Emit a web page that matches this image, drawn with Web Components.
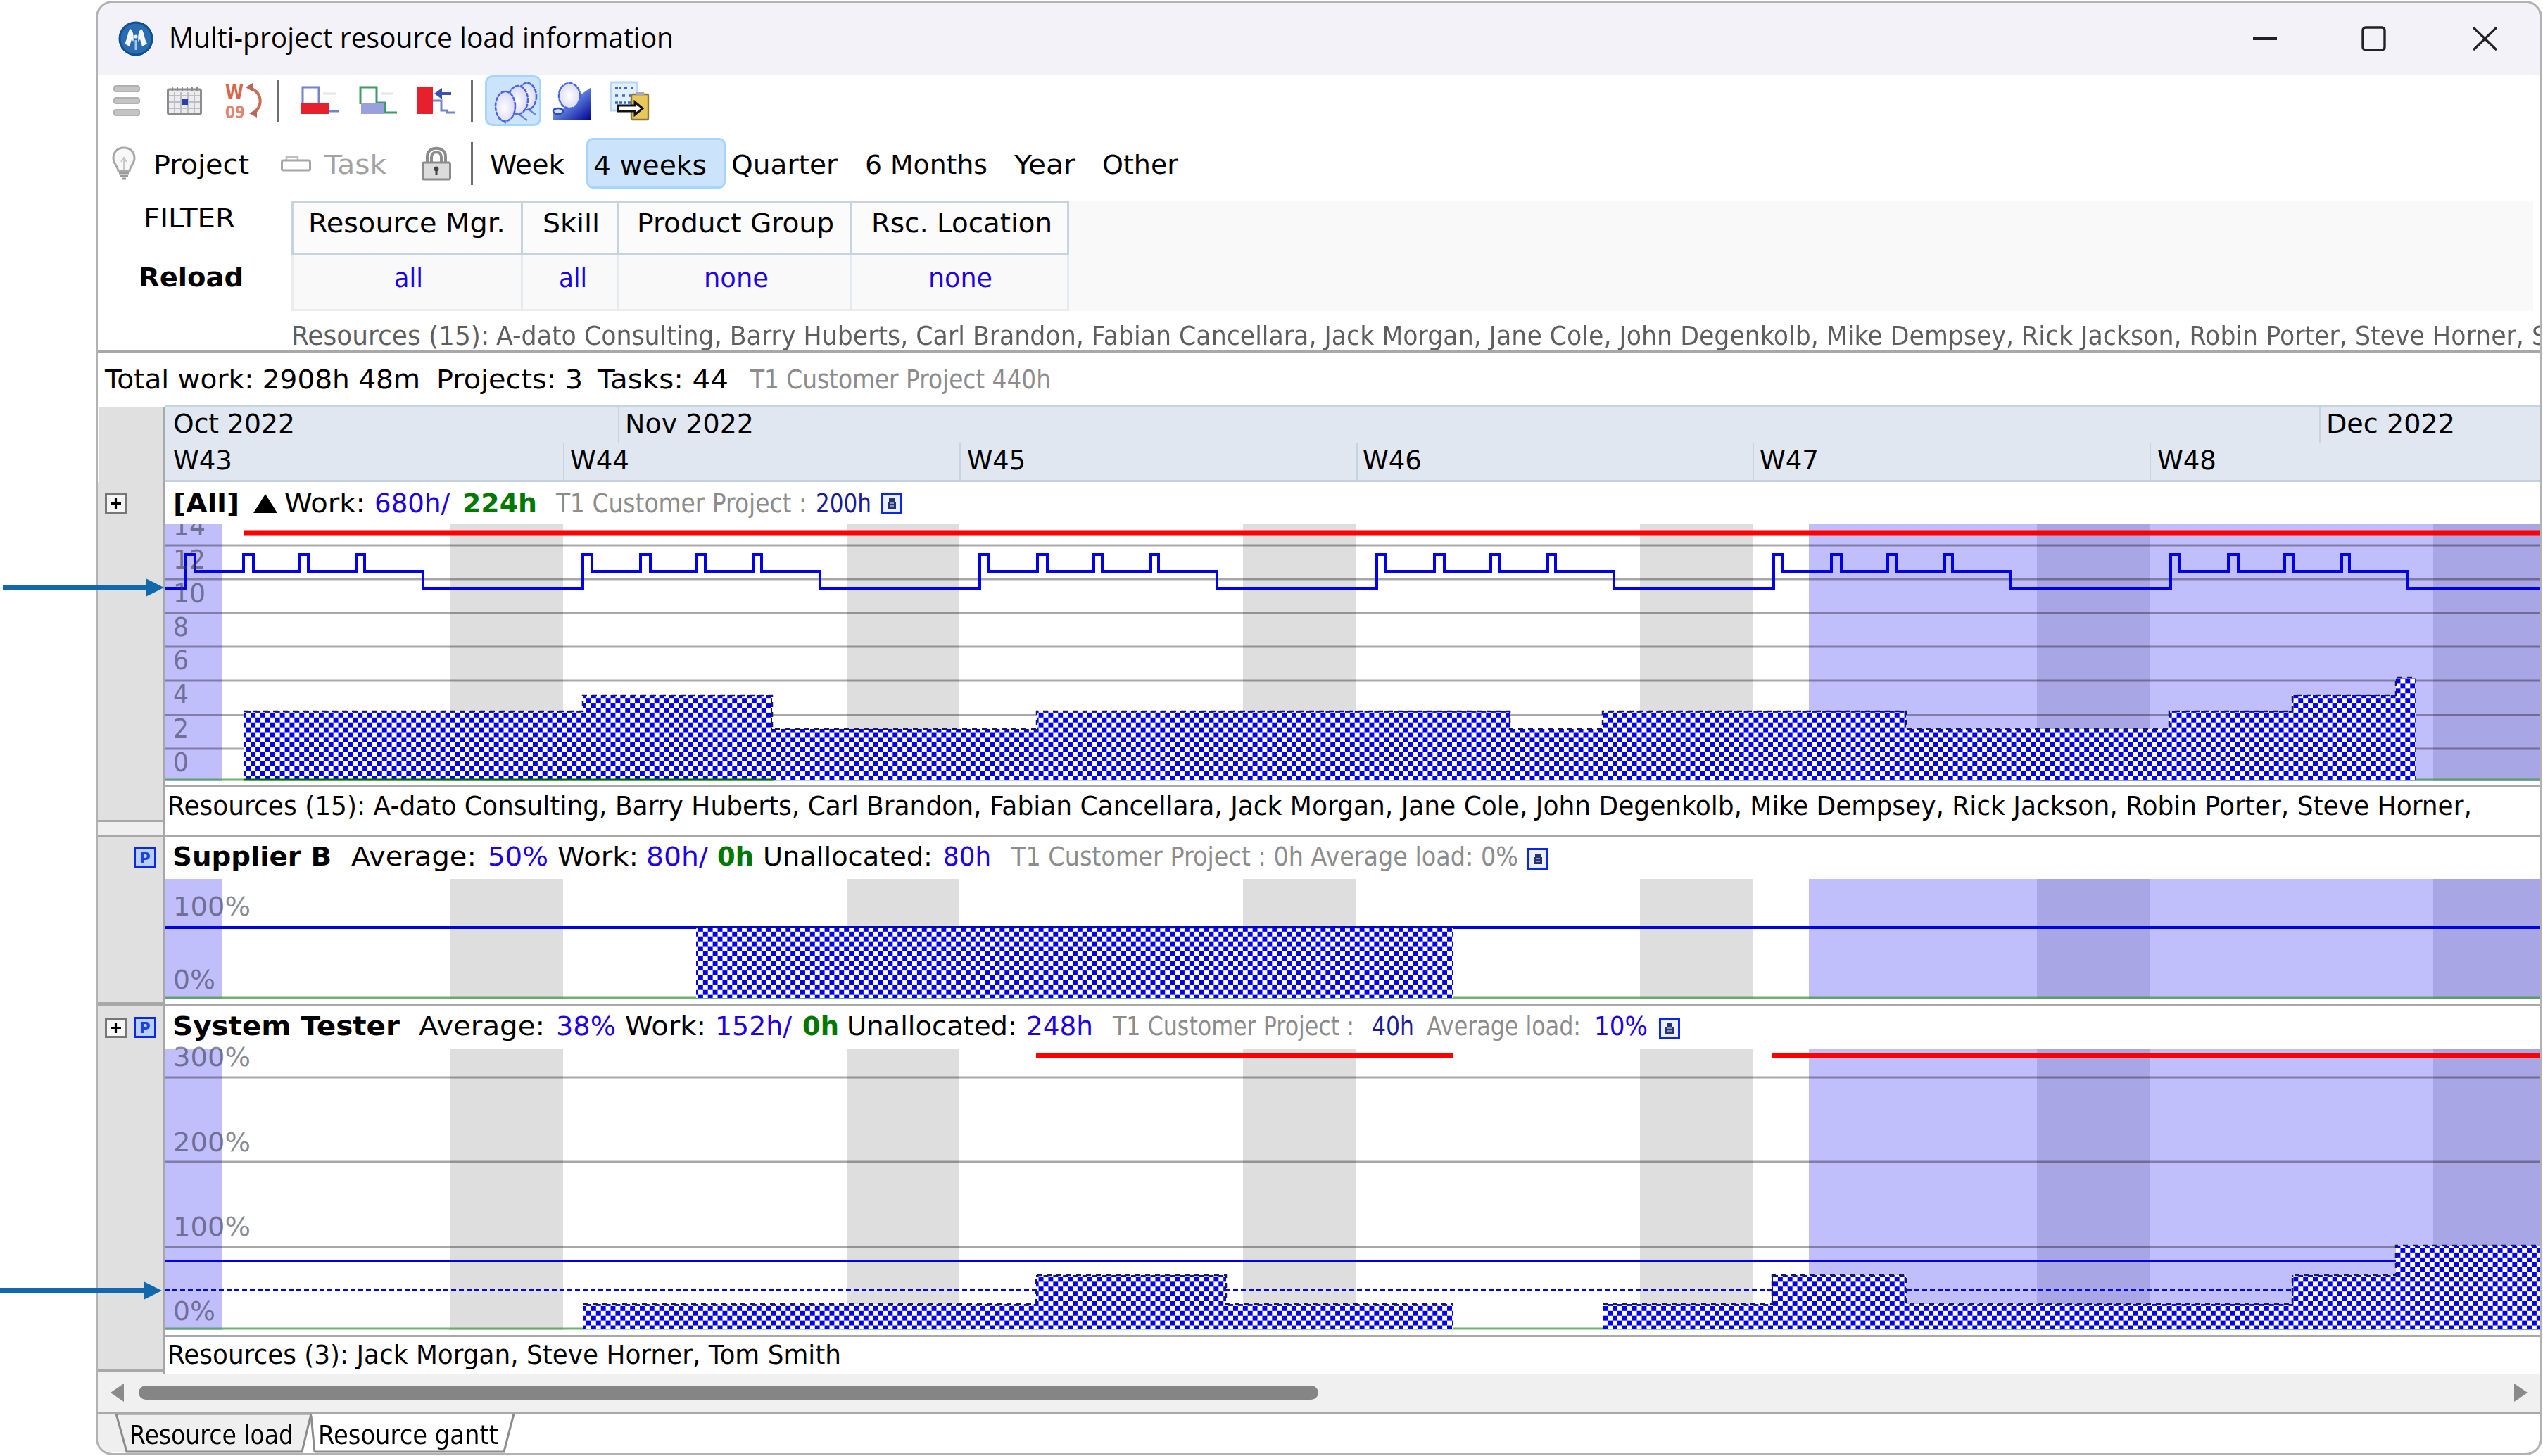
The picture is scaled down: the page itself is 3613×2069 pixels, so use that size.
<!DOCTYPE html>
<html lang="en"><head><meta charset="utf-8"><title>Multi-project resource load information</title>
<style>
html,body{margin:0;padding:0;background:#fff;width:3613px;height:2069px;overflow:hidden}
body{position:relative;font:38px/44px "DejaVu Sans",sans-serif;color:#000}
</style></head><body>
<rs-window>
  <rs-titlebar>
    <rs-row o="139" style="height:102px">
      <rs-icon a="168" b="218" h="50" n="logo"></rs-icon>
      <rs-fit a="240" b="957" f="open" dy="-2" style="font-size:40px">Multi-project resource load information</rs-fit>
      <rs-icon a="3201" b="3235" h="6" n="min"></rs-icon>
      <rs-icon a="3355" b="3390" h="36" n="max"></rs-icon>
      <rs-icon a="3512" b="3549" h="36" n="close"></rs-icon>
    </rs-row>
  </rs-titlebar>
  <rs-row o="139" style="height:74px">
    <rs-icon a="161" b="199" h="44" n="menu"></rs-icon>
    <rs-icon a="237" b="287" h="41" n="cal"></rs-icon>
    <rs-icon a="320" b="373" h="52" n="w09"></rs-icon>
    <rs-icon a="394" b="397" h="61" n="sep"></rs-icon>
    <rs-icon a="427" b="482" h="42" n="lred"></rs-icon>
    <rs-icon a="509" b="565" h="42" n="lgreen"></rs-icon>
    <rs-icon a="593" b="647" h="42" n="larrow"></rs-icon>
    <rs-icon a="669" b="672" h="61" n="sep"></rs-icon>
    <rs-icon a="689" b="769" h="72" n="team"></rs-icon>
    <rs-icon a="784" b="840" h="55" n="slope"></rs-icon>
    <rs-icon a="867" b="922" h="55" n="doc"></rs-icon>
  </rs-row>
  <rs-row o="139" style="height:72px;margin:16px 0 18px">
    <rs-icon a="159" b="193" h="48" n="bulb"></rs-icon>
    <rs-fit a="218" b="354" dy="2">Project</rs-fit>
    <rs-icon a="399" b="442" h="23" n="task"></rs-icon>
    <rs-fit a="461" b="549" c="mute" dy="2">Task</rs-fit>
    <rs-icon a="599" b="641" h="48" n="lock"></rs-icon>
    <rs-icon a="669" b="672" h="61" n="sep"></rs-icon>
    <rs-fit a="696" b="802" dy="2">Week</rs-fit>
    <rs-btn a="833" b="1031"><rs-fit o="836" a="843" b="1004" dy="3">4 weeks</rs-fit></rs-btn>
    <rs-fit a="1039" b="1190" dy="2">Quarter</rs-fit>
    <rs-fit a="1229" b="1403" dy="2">6 Months</rs-fit>
    <rs-fit a="1441" b="1528" dy="2">Year</rs-fit>
    <rs-fit a="1566" b="1674" dy="2">Other</rs-fit>
  </rs-row>
  <rs-filter></rs-filter>
  <rs-row o="139" class="res" style="height:56px;align-items:flex-start;padding-top:13px;box-sizing:border-box;overflow:hidden;color:#5e5e5e">
    <rs-fit a="414" b="695">Resources (15):</rs-fit>
    <rs-fit a="705" b="3619">A-dato Consulting, Barry Huberts, Carl Brandon, Fabian Cancellara, Jack Morgan, Jane Cole, John Degenkolb, Mike Dempsey, Rick Jackson, Robin Porter, Steve Horner, S</rs-fit>
  </rs-row>
  <rs-rule></rs-rule>
  <rs-row o="139" style="height:74px">
    <rs-fit a="149" b="597">Total work: 2908h 48m</rs-fit>
    <rs-fit a="620" b="828">Projects: 3</rs-fit>
    <rs-fit a="849" b="1035">Tasks: 44</rs-fit>
    <rs-fit a="1066" b="1493" c="grey">T1 Customer Project 440h</rs-fit>
  </rs-row>
  <rs-timeline></rs-timeline>

  <rs-section style="--strip:21px;--rule:3px;--foot:70px">
    <rs-row slot="tools" o="139" style="height:60px"><rs-icon a="149" b="180" h="29" n="plus"></rs-icon></rs-row>
    <rs-row slot="head" o="234" style="height:60px">
      <rs-fit a="246" b="340" c="bold">[All]</rs-fit>
      <rs-icon a="360" b="394" h="28" n="tri"></rs-icon>
      <rs-fit a="404" b="519">Work:</rs-fit>
      <rs-fit a="532" b="639" c="blue">680h/</rs-fit>
      <rs-fit a="657" b="763" c="green">224h</rs-fit>
      <rs-fit a="790" b="1146" c="grey">T1 Customer Project :</rs-fit>
      <rs-fit a="1159" b="1238" c="navy">200h</rs-fit>
      <rs-icon a="1252" b="1283" h="31" n="mini"></rs-icon>
    </rs-row>
    <rs-chart slot="chart" k="all" style="height:371px;overflow:hidden"></rs-chart>
    <rs-row slot="foot" o="234" style="align-items:flex-start;padding-top:4px">
      <rs-fit a="238" b="3512">Resources (15): A-dato Consulting, Barry Huberts, Carl Brandon, Fabian Cancellara, Jack Morgan, Jane Cole, John Degenkolb, Mike Dempsey, Rick Jackson, Robin Porter, Steve Horner,</rs-fit>
    </rs-row>
  </rs-section>

  <rs-section style="--strip:0px;--rule:3px;--foot:0px;--footrule:0px">
    <rs-row slot="tools" o="139" style="height:60px"><rs-icon a="190" b="222" h="30" n="p"></rs-icon></rs-row>
    <rs-row slot="head" o="234" style="height:60px;padding-bottom:4px">
      <rs-fit a="245" b="471" c="bold">Supplier B</rs-fit>
      <rs-fit a="499" b="677">Average:</rs-fit>
      <rs-fit a="693" b="779" c="blue">50%</rs-fit>
      <rs-fit a="792" b="907">Work:</rs-fit>
      <rs-fit a="918" b="1006" c="blue">80h/</rs-fit>
      <rs-fit a="1019" b="1071" c="green">0h</rs-fit>
      <rs-fit a="1084" b="1325">Unallocated:</rs-fit>
      <rs-fit a="1340" b="1408" c="blue">80h</rs-fit>
      <rs-fit a="1437" b="2157" c="grey">T1 Customer Project : 0h Average load: 0%</rs-fit>
      <rs-icon a="2170" b="2200" h="31" n="mini" style="margin-top:6px"></rs-icon>
    </rs-row>
    <rs-chart slot="chart" k="sup" style="height:178px"></rs-chart>
  </rs-section>

  <rs-section style="--strip:6px;--rule:0px;--foot:55px">
    <rs-row slot="tools" o="139" style="height:60px"><rs-icon a="149" b="180" h="29" n="plus"></rs-icon><rs-icon a="190" b="222" h="30" n="p"></rs-icon></rs-row>
    <rs-row slot="head" o="234" style="height:60px;padding-bottom:4px">
      <rs-fit a="245" b="568" c="bold">System Tester</rs-fit>
      <rs-fit a="595" b="774">Average:</rs-fit>
      <rs-fit a="790" b="875" c="blue">38%</rs-fit>
      <rs-fit a="888" b="1003">Work:</rs-fit>
      <rs-fit a="1016" b="1125" c="blue">152h/</rs-fit>
      <rs-fit a="1140" b="1192" c="green">0h</rs-fit>
      <rs-fit a="1203" b="1445">Unallocated:</rs-fit>
      <rs-fit a="1458" b="1553" c="blue">248h</rs-fit>
      <rs-fit a="1581" b="1924" c="grey">T1 Customer Project :</rs-fit>
      <rs-fit a="1949" b="2009" c="navy">40h</rs-fit>
      <rs-fit a="2027" b="2246" c="grey">Average load:</rs-fit>
      <rs-fit a="2265" b="2341" c="blue">10%</rs-fit>
      <rs-icon a="2357" b="2387" h="31" n="mini" style="margin-top:6px"></rs-icon>
    </rs-row>
    <rs-chart slot="chart" k="test" style="height:407px"></rs-chart>
    <rs-row slot="foot" o="234" style="align-items:flex-start;padding-top:3px">
      <rs-fit a="238" b="1195">Resources (3): Jack Morgan, Steve Horner, Tom Smith</rs-fit>
    </rs-row>
  </rs-section>

  <rs-scrollbar></rs-scrollbar>
  <rs-tabs>
    <rs-fit a="184" b="417" o="139">Resource load</rs-fit>
    <rs-fit a="452" b="708">Resource gantt</rs-fit>
  </rs-tabs>
</rs-window>
<rs-callout style="left:4px;top:821px;--w:229px"></rs-callout>
<rs-callout style="left:0;top:1820px;--w:230px"></rs-callout>

<script>
const def=(n,c)=>customElements.define(n,c);
function placeX(el){
  const a=+el.getAttribute('a');
  if(!el.hasAttribute('a'))return;
  const p=el.previousElementSibling;
  let o;
  if(el.hasAttribute('o'))o=+el.getAttribute('o');
  else if(p&&p.hasAttribute('b'))o=+p.getAttribute('b');
  else o=+(el.parentElement&&el.parentElement.getAttribute('o')||a);
  el.style.marginLeft=(a-o)+'px';
}
class Fit extends HTMLElement{
  connectedCallback(){
    if(this.shadowRoot)return;
    const s=this.attachShadow({mode:'open'});
    s.innerHTML=`<style>
      :host{display:inline-block;flex:none;white-space:nowrap;height:44px;line-height:44px}
      :host([f=open]){font-family:"Open Sans",sans-serif}
      :host([c=bold]){font-weight:700}
      :host([c=blue]){color:#2000e8}
      :host([c=navy]){color:#1c1c96}
      :host([c=green]){color:#007800;font-weight:700}
      :host([c=grey]){color:#8c8c8c}
      :host([c=mute]){color:#a2a2a2}
      span{display:inline-block;transform-origin:0 50%}
    </style><span><slot></slot></span>`;
    placeX(this);
    const w=+this.getAttribute('b')-+this.getAttribute('a');
    this.style.width=w+'px';
    const sp=s.querySelector('span');
    const nat=sp.getBoundingClientRect().width||w;
    const dy=this.getAttribute('dy')||0;
    sp.style.transform=`translateY(${dy}px) scaleX(${w/nat})`;
  }
}
const dash='stroke="#4a66dc" stroke-width="2.600" stroke-dasharray="4 3" stroke-linecap="round"';
const ICONS={
 logo:()=>`<circle cx="25" cy="25" r="24" fill="#2a6cb0"/><circle cx="25" cy="25" r="23" fill="none" stroke="#114f94" stroke-width="3"/>
  <path d="M17 11C21 14 22.500 20 21.500 29L19 26L16 36L9 32C13 26 13 16 17 11Z" fill="#f4f8fc"/><path d="M33 11C29 14 27.500 20 28.500 29L31 26L34 36L41 32C37 26 37 16 33 11Z" fill="#f4f8fc"/><circle cx="25" cy="22" r="2.600" fill="#e4eef8"/><path d="M25 27V41" stroke="#a8c8e4" stroke-width="3"/>`,
 min:()=>`<rect y="1" width="34" height="4" fill="#222"/>`,
 max:()=>`<rect x="2" y="2" width="31" height="32" rx="4" fill="none" stroke="#222" stroke-width="3.400"/>`,
 close:()=>`<path d="M2 2L35 34M35 2L2 34" stroke="#222" stroke-width="3.200" fill="none"/>`,
 menu:()=>`<g fill="#c4c4c4" stroke="#b0b0b0" stroke-width="2"><rect x="1" y="1" width="36" height="8" rx="3"/><rect x="1" y="18" width="36" height="8" rx="3"/><rect x="1" y="35" width="36" height="8" rx="3"/></g>`,
 cal:()=>`<rect x="1.500" y="4" width="47" height="35" rx="2" fill="#ececec" stroke="#8c8c8c" stroke-width="3"/>
  <path d="M8 1V7M15 1V7M22 1V7M29 1V7M36 1V7M43 1V7" stroke="#8c8c8c" stroke-width="2"/>
  <path d="M3 13H47M3 22H47M3 31H47M11 8V38M20 8V38M30 8V38M39 8V38" stroke="#bdbdc8" stroke-width="2"/><rect x="21" y="17" width="9" height="9" fill="#2a3fb0"/>`,
 w09:()=>`<text x="0" y="23" font-family="DejaVu Sans" font-size="27" font-weight="700" textLength="26" lengthAdjust="spacingAndGlyphs" fill="#d8664c">W</text><text x="0" y="51" font-family="DejaVu Sans" font-size="24" font-weight="700" textLength="28" lengthAdjust="spacingAndGlyphs" fill="#e08570">09</text>
  <path d="M32 7C52 12 56 32 39 45" fill="none" stroke="#c87058" stroke-width="4"/><path d="M29 7L39 1V13ZM34 44L45 38L45 50Z" fill="#b8665a"/>`,
 sep:()=>`<rect width="3" height="61" fill="#6e6e6e"/>`,
 lred:()=>`<path d="M3 26V2H26V26" fill="none" stroke="#7384cc" stroke-width="3"/><path d="M40 36H54" stroke="#7384cc" stroke-width="3"/><path d="M32 11H50" stroke="#e4e4e4" stroke-width="3"/><rect x="1" y="25" width="40" height="15" fill="#e6202c"/>`,
 lgreen:()=>`<path d="M3 26V2H26V24H38V38H55" fill="none" stroke="#3f9a66" stroke-width="3"/><path d="M32 11H50" stroke="#e4e4e4" stroke-width="3"/><rect x="4" y="25" width="33" height="15" fill="#9aa0dc"/>`,
 larrow:()=>`<rect x="0" y="1" width="22" height="39" fill="#e6202c"/><path d="M26 11H48" stroke="#3a52b0" stroke-width="4"/><path d="M24 11L35 3V19Z" fill="#3a52b0"/><path d="M22 21H34V35H42V38H54" fill="none" stroke="#7384cc" stroke-width="3"/>`,
 team:()=>`<defs><radialGradient id="g" cx=".45" cy=".55" r=".6"><stop offset="0" stop-color="#fff"/><stop offset="1" stop-color="#d4d4f4"/></radialGradient></defs>
  <rect x="1.500" y="1.500" width="77" height="69" rx="9" fill="#cce4fb" stroke="#a6d6fb" stroke-width="3"/>
  <path d="M18 60L30 68M44 52L60 64M56 44L72 56" stroke="#6a86dc" stroke-width="2.400"/>
  <ellipse cx="60" cy="30" rx="13" ry="19" fill="url(#g)" ${dash}/><ellipse cx="47" cy="35" rx="14" ry="20" fill="url(#g)" ${dash}/><ellipse cx="29" cy="44" rx="14" ry="21" fill="url(#g)" ${dash}/>`,
 slope:()=>`<defs><linearGradient id="h" x1="0" y1="0" x2="1" y2="1"><stop offset="0" stop-color="#c8daf6"/><stop offset=".55" stop-color="#5070d4"/><stop offset="1" stop-color="#000090"/></linearGradient><radialGradient id="g2"><stop offset="0" stop-color="#fff"/><stop offset="1" stop-color="#dcdcf6"/></radialGradient></defs>
  <path d="M1 54V43L18 38L36 22L56 8V54Z" fill="url(#h)"/><ellipse cx="25" cy="20" rx="15" ry="18" fill="url(#g2)" ${dash}/><ellipse cx="9" cy="42" rx="7" ry="4" fill="#d4e0f4" stroke="#2848c8" stroke-width="2.600"/>`,
 doc:()=>`<rect x="1" y="1" width="37" height="40" fill="#e4effc" stroke="#b8d6f6" stroke-width="3"/><path d="M7 9H16M20 9H24M29 9H33M7 20H13M17 20H22M26 20H33M7 30H33" stroke="#2e6ad8" stroke-width="3.400" stroke-dasharray="4 2"/>
  <rect x="30" y="18" width="24" height="36" rx="2" fill="#e8c858" stroke="#8a7a3a" stroke-width="2.400"/><rect x="36" y="15" width="12" height="6" fill="#aaa"/>
  <path d="M11 34H35V29L46 38L35 47V42H11Z" fill="#fff" stroke="#111" stroke-width="3"/>`,
 bulb:()=>`<path d="M17 2C7 2 2 9 2 17C2 24 8 28 9 35H25C26 28 32 24 32 17C32 9 27 2 17 2Z" fill="#f8f8f8" stroke="#a8a8a8" stroke-width="3"/><path d="M13 22L17 16L21 22M17 16V34" fill="none" stroke="#c8c8c8" stroke-width="2"/><path d="M10 38H24M11 42H23M14 46H20" stroke="#9c9c9c" stroke-width="3"/>`,
 task:()=>`<path d="M8 11V2H24V7" fill="none" stroke="#c0c0c0" stroke-width="2.600"/><rect x="1.500" y="7" width="40" height="14" rx="2" fill="#fff" stroke="#a6a6a6" stroke-width="3"/>`,
 lock:()=>`<path d="M8 24V14C8 -1 34 -1 34 14V24M14 24V15C14 6 28 6 28 15V24" fill="none" stroke="#8c8c8c" stroke-width="4"/><rect x="1.500" y="23" width="39" height="24" rx="2" fill="#dcdcdc" stroke="#8c8c8c" stroke-width="3"/><circle cx="21" cy="32" r="3.400" fill="#444"/><rect x="19.500" y="32" width="3" height="9" fill="#444"/>`,
 plus:()=>`<rect x="1.500" y="1.500" width="28" height="26" fill="#f6f6f6" stroke="#777" stroke-width="3"/><path d="M15.500 7V22M8 14.500H23" stroke="#000" stroke-width="3.200"/>`,
 p:()=>`<rect x="1.500" y="1.500" width="29" height="27" fill="#b8d0ff" stroke="#0a28e6" stroke-width="3"/><text x="16" y="23" text-anchor="middle" font-family="DejaVu Sans" font-size="21" font-weight="700" fill="#1a44e0">P</text>`,
 mini:()=>`<rect x="1.500" y="1.500" width="27" height="28" fill="#eaf0ff" stroke="#0a28e6" stroke-width="3"/><path d="M11 8H19V13H21V23H9V13H11Z" fill="#26346e"/><path d="M12 15H18M12 19H18" stroke="#a8b8e8" stroke-width="1.600"/>`,
 tri:()=>`<path d="M17 1L34 28H0Z" fill="#000"/>`,
 left:()=>`<path d="M19 0V26L0 13Z" fill="#8a8a8a"/>`,
 right:()=>`<path d="M0 0V26L19 13Z" fill="#8a8a8a"/>`
};
class Icon extends HTMLElement{
  connectedCallback(){
    if(this.shadowRoot)return;
    const w=+this.getAttribute('b')-+this.getAttribute('a'),h=+this.getAttribute('h');
    this.attachShadow({mode:'open'}).innerHTML=`<style>:host{display:block;flex:none;line-height:0}svg{display:block;overflow:visible}</style><svg width="${w}" height="${h}" viewBox="0 0 ${w} ${h}">${ICONS[this.getAttribute('n')]()}</svg>`;
    placeX(this);
  }
}
class Row extends HTMLElement{
  constructor(){super();this.attachShadow({mode:'open'}).innerHTML=`<style>:host{display:flex;align-items:center;box-sizing:border-box}</style><slot></slot>`;}
}
class Btn extends HTMLElement{
  constructor(){super();this.attachShadow({mode:'open'}).innerHTML=`<style>:host{display:flex;align-items:center;flex:none;box-sizing:border-box;height:72px;border:3px solid #a8d6fb;border-radius:9px;background:#cce4fb}</style><slot></slot>`;}
  connectedCallback(){placeX(this);this.style.width=(this.getAttribute('b')-this.getAttribute('a'))+'px';}
}
class Win extends HTMLElement{
  constructor(){super();this.attachShadow({mode:'open'}).innerHTML=`<style>
   :host{display:block;box-sizing:border-box;position:absolute;left:136px;top:1px;width:3476px;height:2067px;border:3px solid #b2b2b2;border-radius:24px;background:#fff;overflow:hidden;filter:blur(.7px)}
  </style><slot></slot>`;}
}
class Title extends HTMLElement{
  constructor(){super();this.attachShadow({mode:'open'}).innerHTML=`<style>:host{display:block;background:#f3f2f8}</style><slot></slot>`;}
}
class Rule extends HTMLElement{
  constructor(){super();this.attachShadow({mode:'open'}).innerHTML=`<style>:host{display:block;height:4px;background:#a8a8a8}</style>`;}
}
class Filter extends HTMLElement{
  constructor(){super();this.attachShadow({mode:'open'}).innerHTML=`<style>
   :host{display:flex;height:156px}
   .lab{width:275px;flex:none;display:grid;grid-template-rows:77px 79px}
   .lab rs-row{align-items:flex-start}
   .g{flex:none;width:3185px;background:#f9f9f9;display:grid;grid-template-columns:329px 137px 331px 308px 1fr;grid-template-rows:77px 79px}
   .h,.v{box-sizing:border-box;display:flex}
   .h{border:3px solid #c6d3e3;border-left-width:0;padding-top:6px;background:#fbfbfb}
   .h.f{border-left-width:3px}
   .v{border-right:3px solid #e6e9ee;border-bottom:3px solid #ececec;padding-top:10px;color:#2000e8}
   .v.f{border-left:3px solid #ececec}
   .e{background:#f9f9f9}
  </style>
  <div class="lab">
   <rs-row o="139" style="padding-top:2px"><rs-fit a="204" b="334">FILTER</rs-fit></rs-row>
   <rs-row o="139" style="padding-top:9px"><rs-fit a="197" b="346" c="bold">Reload</rs-fit></rs-row>
  </div>
  <div class="g">
   <div class="h f"><rs-fit o="417" a="438" b="718">Resource Mgr.</rs-fit></div>
   <div class="h"><rs-fit o="743" a="771" b="852">Skill</rs-fit></div>
   <div class="h"><rs-fit o="880" a="905" b="1185">Product Group</rs-fit></div>
   <div class="h"><rs-fit o="1211" a="1238" b="1495">Rsc. Location</rs-fit></div>
   <div class="e"></div>
   <div class="v f"><rs-fit o="417" a="560" b="601" c="blue">all</rs-fit></div>
   <div class="v"><rs-fit o="743" a="794" b="834" c="blue">all</rs-fit></div>
   <div class="v"><rs-fit o="880" a="1000" b="1092" c="blue">none</rs-fit></div>
   <div class="v"><rs-fit o="1211" a="1319" b="1410" c="blue">none</rs-fit></div>
   <div class="e"></div>
  </div>`;}
}
class Timeline extends HTMLElement{
  constructor(){super();
   const m=[[234,878,'Oct 2022',246,419],[878,3295,'Nov 2022',888,1071],[3295,3609,'Dec 2022',3305,3488]];
   const w=[[234,800,'W43',246,330],[800,1363,'W44',810,894],[1363,1927,'W45',1374,1457],[1927,2490,'W46',1936,2020],[2490,3054,'W47',2500,2584],[3054,3609,'W48',3065,3149]];
   const cell=(r,i)=>`<div class="c" style="width:${r[1]-r[0]}px"><rs-fit dy="-2" o="${i?r[0]+2:r[0]}" a="${r[3]}" b="${r[4]}">${r[2]}</rs-fit></div>`;
   this.attachShadow({mode:'open'}).innerHTML=`<style>
   :host{display:flex;height:109px;box-sizing:border-box}
   .l{width:90px;margin-left:2px;margin-top:2px;background:#e0e0e0;flex:none;border-right:3px solid #a9a9a9}
   .r{flex:1;background:#e1e7f0;border-top:3px solid #c6d3e3;border-bottom:3px solid #c2d0e0;box-sizing:border-box;display:flex;flex-direction:column}
   .y{height:50px;display:flex;align-items:flex-end}.y2{height:53px;display:flex;align-items:stretch}
   .c{box-sizing:border-box;flex:none;display:flex;align-items:center;border-left:2px solid #c6d3e3}
   .y .c{height:50px}.y .c:first-child,.y2 .c:first-child{border-left:0}
  </style><div class="l"></div><div class="r"><div class="y">${m.map(cell).join('')}</div><div class="y2">${w.map(cell).join('')}</div></div>`;}
}
class Section extends HTMLElement{
  constructor(){super();this.attachShadow({mode:'open'}).innerHTML=`<style>
   :host{display:grid;grid-template-columns:95px 1fr;box-sizing:border-box;border-bottom:var(--rule,0) solid #a8a8a8}
   .l{display:flex;flex-direction:column;box-sizing:border-box}
   .fill{flex:1;background:#e0e0e0;border-right:3px solid #a6a6a6}
   .strip{box-sizing:border-box;height:var(--strip,0);background:#efefef;border-top:3px solid #a8a8a8;border-right:3px solid #a6a6a6}
   .r{min-width:0}
   .foot{box-sizing:border-box;height:var(--foot,0);border-top:var(--footrule,3px) solid #a8a8a8;overflow:hidden}
  </style><div class="l"><div class="fill"><slot name="tools"></slot></div><div class="strip"></div></div>
  <div class="r"><slot name="head"></slot><slot name="chart"></slot><div class="foot"><slot name="foot"></slot></div></div>`;}
}
const CHARTS={
 all:{y0:745,h:371,base:1108,grid:[775,823,871,919,967,1016,1064],
  labels:[['14',747],['12',795],['10',843],['8',891],['6',938],['4',986],['2',1035],['0',1083]],
  red:[[346,3609,757]],areas:[{pts:[[346,1011],[828,988],[1097,1036],[1473,1011],[2145,1036],[2277,1011],[2708,1036],[3082,1011],[3257,988],[3404,963]],end:3433}],
  dark:[346,1100],step:true},
 sup:{y0:1249,h:178,base:1418,grid:[],labels:[['100%',1288],['0%',1392]],red:[],solid:1318,
  areas:[{pts:[[989,1318]],end:2065}]},
 test:{y0:1490,h:407,base:1888,grid:[1531,1651,1772],labels:[['300%',1502],['200%',1623],['100%',1743],['0%',1863]],
  red:[[1472,2065,1500],[2518,3609,1500]],solid:1792,dotted:1833,
  areas:[{pts:[[828,1853],[1472,1812],[1742,1853]],end:2065},{pts:[[2277,1853],[2518,1812],[2708,1853],[3257,1812],[3404,1770]],end:3609}]}
};
class Chart extends HTMLElement{
  connectedCallback(){
    if(this.shadowRoot)return;
    const C=CHARTS[this.getAttribute('k')],X0=234,X1=3609,y0=C.y0,y1=C.base+2,vb=`${X0} ${y0} ${X1-X0} ${C.h}`;
    let b='';
    const rect=(a,c,f)=>`<rect x="${a}" y="${y0}" width="${c-a}" height="${y1-y0}" fill="${f}"/>`;
    b+=rect(234,315,'#c0bffc');
    [[639,800],[1203,1363],[1766,1927],[2330,2490]].forEach(r=>b+=rect(r[0],r[1],'#dedede'));
    b+=rect(2570,3609,'#c0bffc');
    [[2894,3054],[3457,3609]].forEach(r=>b+=rect(r[0],r[1],'#a8a6e4'));
    C.grid.forEach(y=>b+=`<rect x="234" y="${y-1.5}" width="3375" height="3" fill="#000" opacity=".34"/>`);
    b+=`<rect x="234" y="${C.base-1.5}" width="3375" height="3" fill="#3f9a3f" opacity=".75"/>`;
    if(C.solid)b+=`<rect x="234" y="${C.solid-2}" width="3375" height="4" fill="#0000e8"/>`;
    if(C.dotted)b+=`<path d="M234 ${C.dotted}H3609" stroke="#0000e8" stroke-width="4" stroke-dasharray="7 4" fill="none"/>`;
    C.areas.forEach(A=>{
      let d='',top='';
      A.pts.forEach((p,i)=>{d+=(i?`H${p[0]}V${p[1]}`:`M${p[0]} ${C.base}V${p[1]}`);top+=(i?`H${p[0]}V${p[1]}`:`M${p[0]} ${p[1]}`);});
      d+=`H${A.end}V${C.base}Z`;top+=`H${A.end}`;
      b+=`<path d="${d}" fill="url(#ck)"/><path d="${top}" fill="none" stroke="#1a1a50" stroke-width="2.500" stroke-dasharray="7 7"/>`;
    });
    if(C.dark)b+=`<rect x="${C.dark[0]}" y="${C.base-1.5}" width="${C.dark[1]-C.dark[0]}" height="3" fill="#006a00"/>`;
    C.red.forEach(r=>b+=`<rect x="${r[0]}" y="${r[2]-3.5}" width="${r[1]-r[0]}" height="7" fill="#ff0000"/>`);
    if(C.step){
      let d='M234 836';
      for(let k=0;k<6;k++){const s=264+564*k;
        d+=`H${s}V788H${s+13}V812H${s+82}V788H${s+96}V812H${s+162}V788H${s+174}V812H${s+243}V788H${s+254}V812H${s+337}V836`;}
      d+='H3609';
      b+=`<path d="${d}" fill="none" stroke="#0000e8" stroke-width="4"/>`;
    }
    const wd={2:46,1:22,4:110,3:110};
    const lab=C.labels.map(l=>{
      const n=l[0].length,w=l[0]==='0%'?60:wd[n];
      return `<div class="lb" style="top:${l[1]-22-y0}px"><rs-fit o="246" a="246" b="${246+w}">${l[0]}</rs-fit></div>`;
    }).join('');
    this.attachShadow({mode:'open'}).innerHTML=`<style>
      :host{display:block;position:relative}
      svg{display:block}
      .lb{position:absolute;left:12px;color:rgba(50,50,70,.58)}
    </style><svg width="${X1-X0}" height="${C.h}" viewBox="${vb}"><defs>
      <pattern id="ck" patternUnits="userSpaceOnUse" width="13.82" height="13.82" patternTransform="translate(3403.5 964.5)">
        <rect width="13.82" height="13.82" fill="#fff"/><rect width="6.91" height="6.91" fill="#0000ee"/><rect x="6.91" y="6.91" width="6.91" height="6.91" fill="#0000ee"/>
      </pattern></defs>${b}</svg>${lab}`;
  }
}
class Scrollbar extends HTMLElement{
  constructor(){super();this.attachShadow({mode:'open'}).innerHTML=`<style>
   :host{display:flex;align-items:center;background:#f0f0f0;border-bottom:3px solid #a8a8a8;box-sizing:content-box;height:54px}
   .t{width:1676px;height:20px;border-radius:10px;background:#858585;margin-left:21px;flex:none}
   .sp{flex:1}
  </style><rs-icon o="139" a="157" b="176" h="26" n="left"></rs-icon><div class="t"></div><div class="sp"></div><rs-icon o="3572" a="3572" b="3591" h="26" n="right" style="margin-right:18px"></rs-icon>`;}
}
class Tabs extends HTMLElement{
  constructor(){super();this.attachShadow({mode:'open'}).innerHTML=`<style>
   :host{display:flex;align-items:center;height:56px;position:relative}
   svg{position:absolute;left:0;top:0}
   ::slotted(rs-fit){position:relative;top:2px}
  </style><svg width="3473" height="56" viewBox="139 2009 3473 56">
    <path d="M139 2009H165L180 2063H139Z" fill="#efefef"/>
    <path d="M165 2009L180 2063H429L442 2009Z" fill="#efefef" stroke="#8c8c8c" stroke-width="3"/>
    <path d="M447 2063H716L730 2009" fill="none" stroke="#8c8c8c" stroke-width="3"/>
    <path d="M447 2063L442 2012" fill="none" stroke="#8c8c8c" stroke-width="3"/>
  </svg><slot></slot>`;}
}
class Callout extends HTMLElement{
  constructor(){super();this.attachShadow({mode:'open'}).innerHTML=`<style>
   :host{position:absolute;display:flex;align-items:center;height:27px;width:var(--w)}
   .ln{flex:1;height:7px;background:#1268ad}
   .hd{width:0;height:0;border-left:26px solid #1268ad;border-top:13.5px solid transparent;border-bottom:13.5px solid transparent}
  </style><div class="ln"></div><div class="hd"></div>`;}
}
def('rs-row',Row);def('rs-window',Win);def('rs-titlebar',Title);def('rs-rule',Rule);
def('rs-fit',Fit);def('rs-icon',Icon);def('rs-btn',Btn);
def('rs-filter',Filter);def('rs-timeline',Timeline);def('rs-chart',Chart);def('rs-section',Section);
def('rs-scrollbar',Scrollbar);def('rs-tabs',Tabs);def('rs-callout',Callout);
</script>
</body></html>
